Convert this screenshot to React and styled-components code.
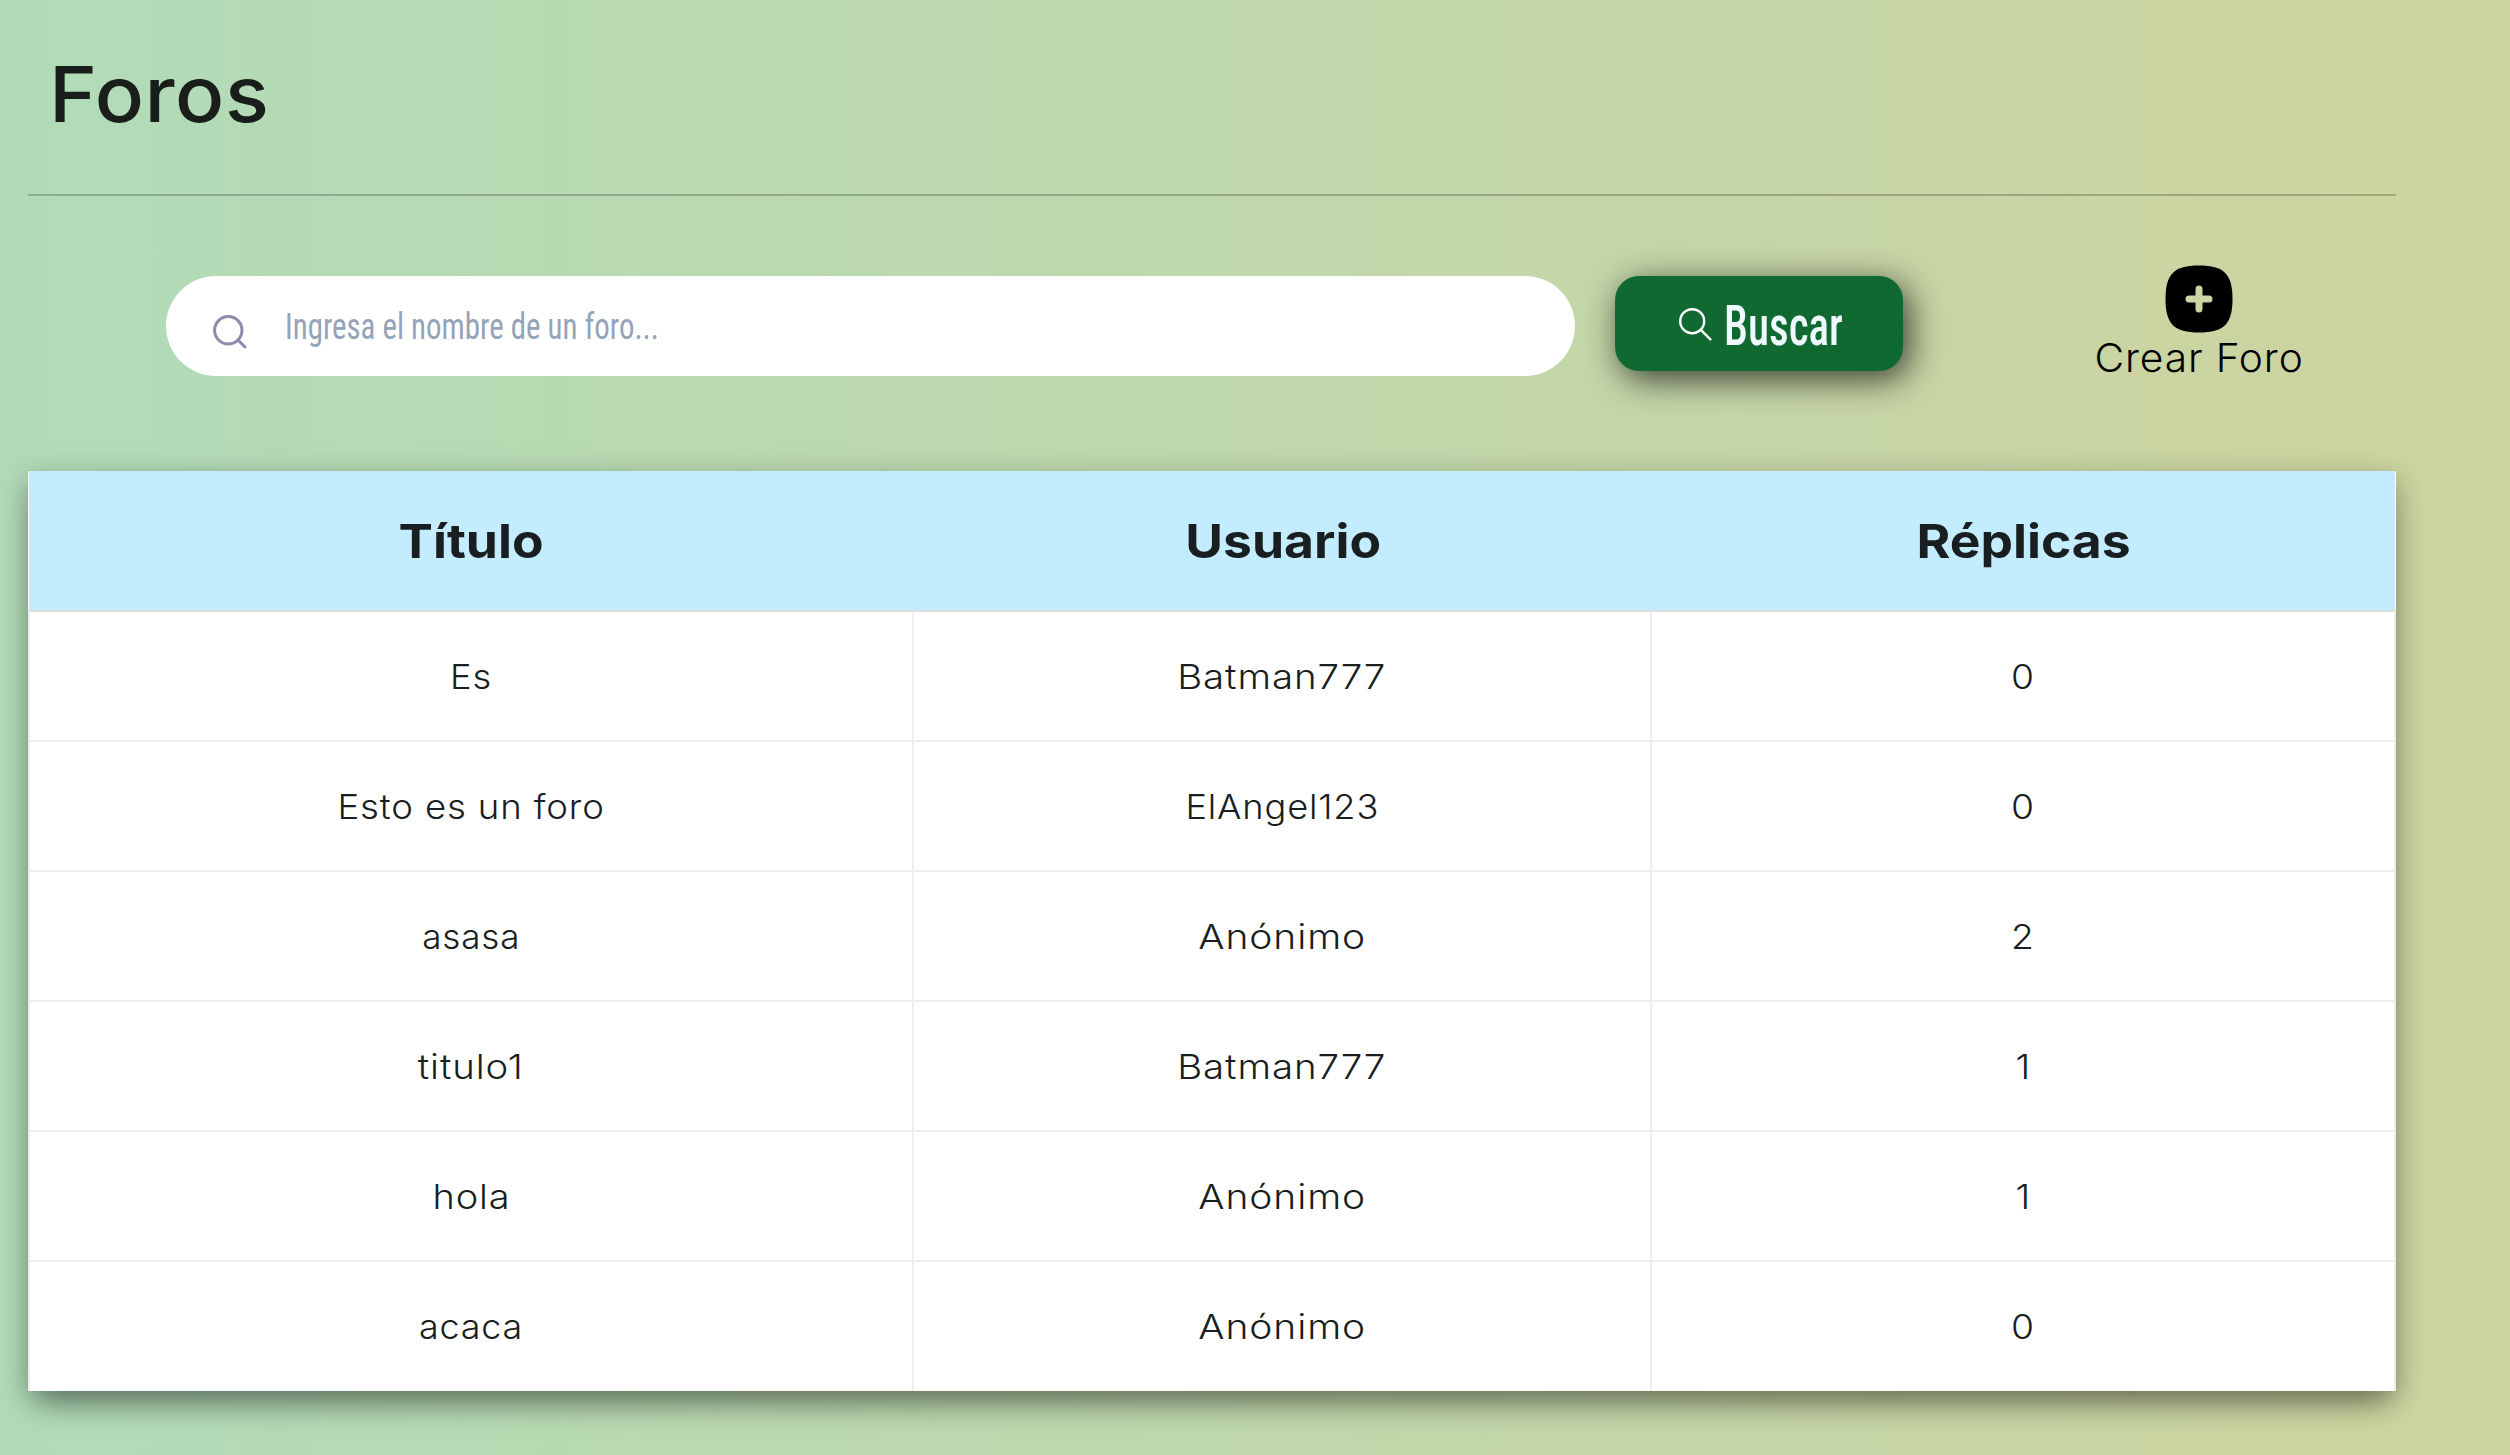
import React from "react";
import styled, { createGlobalStyle } from "styled-components";

const sans = `Inter, "Open Sans", sans-serif`;

const GlobalStyle = createGlobalStyle`
  *, *::before, *::after { box-sizing: border-box; }
  body { margin: 0; font-family: ${sans}; }
`;

const Page = styled.div`
  min-height: 1455px;
  padding: 0 114px 64px 28px;
  background: linear-gradient(90deg, #b1dbb8 0%, #ced49f 100%);
`;

const Header = styled.header`
  height: 196px;
  padding: 45px 0 0 21px;
  border-bottom: 2px solid rgba(25, 30, 25, 0.25);
`;

const Title = styled.h1`
  margin: 0;
  font-size: 77px;
  line-height: 98px;
  font-weight: 500;
  letter-spacing: 0.5px;
  color: #191e1a;
  transform: scaleX(1.06);
  transform-origin: left center;
`;

const Toolbar = styled.div`
  display: flex;
  align-items: flex-start;
  height: 275px;
  padding: 69px 0 0 138px;
`;

const SearchField = styled.label`
  display: flex;
  align-items: center;
  width: 1409px;
  height: 100px;
  margin-top: 11px;
  padding: 0 48px 0 47px;
  border-radius: 50px;
  background: #fff;
  svg { margin-top: 12px; flex: none; }
`;

const SearchInput = styled.input`
  flex: 1;
  height: 60px;
  margin: 1px 0 0 38px;
  padding: 0;
  border: 0;
  outline: 0;
  background: transparent;
  font: 400 36.5px "Roboto", sans-serif;
  font-stretch: 75%;
  transform: scaleX(0.846);
  transform-origin: left center;
  &::placeholder { color: #94a3b8; opacity: 1; }
`;

const SearchButton = styled.button`
  display: flex;
  align-items: center;
  width: 288px;
  height: 95px;
  margin: 11px 0 0 40px;
  padding: 0 0 0 64px;
  gap: 12px;
  border: 0;
  border-radius: 24px;
  background: #116932;
  color: aliceblue;
  box-shadow: 6px 8px 34px rgba(0, 0, 0, 0.72);
  svg { flex: none; margin-top: 1px; }
`;

const ButtonLabel = styled.span`
  width: 118px;
  margin-top: 4px;
  white-space: nowrap;
  text-align: left;
  font: 500 55px/90px "Roboto", sans-serif;
  font-stretch: 75%;
  transform: scaleX(0.785);
  transform-origin: left center;
`;

const CreateLink = styled.a`
  display: flex;
  flex-direction: column;
  align-items: center;
  width: 260px;
  margin-left: 166px;
  color: #000;
  font-size: 39px;
  font-weight: 300;
  line-height: 50px;
  letter-spacing: 0.8px;
  svg { display: block; }
`;

const Table = styled.table`
  width: 2368px;
  height: 920px;
  table-layout: fixed;
  border-collapse: separate;
  border-spacing: 0;
  background: #fff;
  text-align: center;
  box-shadow: 0 9px 28px rgba(0, 0, 0, 0.34), 0 24px 30px -14px rgba(0, 0, 0, 0.25);
`;

const HeadCell = styled.th`
  width: ${(p) => p.$width}px;
  height: 141px;
  padding: 0;
  background: #c4ecff;
  border-bottom: 2px solid #dedede;
  color: #191e20;
  font-size: 47px;
  font-weight: 700;
  &:first-child { border-left: 1px solid #fff; }
  &:last-child { border-right: 1px solid #fff; }
`;

const Cell = styled.td`
  height: 130px;
  padding: 0;
  border-right: 2px solid #eee;
  border-bottom: 2px solid #eee;
  color: #191e20;
  font-size: 34.5px;
  font-weight: 300;
  letter-spacing: 0.8px;
  &:first-child { border-left: 2px solid #eee; }
  tr:last-child > & { height: 129px; border-bottom: 0; }
`;

const Wide = styled.span`
  display: inline-block;
  transform: scaleX(${(p) => p.$stretch});
`;

const FieldIcon = () => (
  <svg width="34" height="34" viewBox="0 0 34 34" fill="none" stroke="#8d8aab" strokeWidth="3" strokeLinecap="round">
    <circle cx="15.3" cy="15.3" r="13.7" />
    <path d="M25.2 25.2 32 32" />
  </svg>
);

const ButtonIcon = () => (
  <svg width="33" height="33" viewBox="0 0 33 33" fill="none" stroke="#fff" strokeWidth="2.4" strokeLinecap="round">
    <circle cx="13.2" cy="13.2" r="12" />
    <path d="M21.8 21.8 31.4 31.4" />
  </svg>
);

const PlusIcon = () => (
  <svg width="68" height="68" viewBox="0 0 68 68">
    <path d="M34 0.5C59 0.5 67.5 9 67.5 34S59 67.5 34 67.5.5 59 .5 34 9 .5 34 .5Z" />
    <path d="M34 24v20M24 34h20" stroke="#ccd5a3" strokeWidth="7" strokeLinecap="round" />
  </svg>
);

const columns = [
  { label: "Título", width: 886 },
  { label: "Usuario", width: 738 },
  { label: "Réplicas", width: 744 },
];

const forums = [
  { title: "Es", user: "Batman777", replies: 0, stretch: 1.05 },
  { title: "Esto es un foro", user: "ElAngel123", replies: 0, stretch: 1.06 },
  { title: "asasa", user: "Anónimo", replies: 2, stretch: 1.015 },
  { title: "titulo1", user: "Batman777", replies: 1, stretch: 1.11 },
  { title: "hola", user: "Anónimo", replies: 1, stretch: 1.1 },
  { title: "acaca", user: "Anónimo", replies: 0, stretch: 1.04 },
];

const userStretch = { Batman777: 1.115, ElAngel123: 1.05, Anónimo: 1.13 };

export default function App() {
  return (
    <>
      <GlobalStyle />
      <Page>
        <Header>
          <Title>Foros</Title>
        </Header>
        <Toolbar>
          <SearchField>
            <FieldIcon />
            <SearchInput placeholder="Ingresa el nombre de un foro..." />
          </SearchField>
          <SearchButton>
            <ButtonIcon />
            <ButtonLabel>Buscar</ButtonLabel>
          </SearchButton>
          <CreateLink>
            <PlusIcon />
            <Wide $stretch={1.045}>Crear Foro</Wide>
          </CreateLink>
        </Toolbar>
        <Table>
          <thead>
            <tr>
              {columns.map((c) => (
                <HeadCell key={c.label} $width={c.width}>
                  <Wide $stretch={1.098}>{c.label}</Wide>
                </HeadCell>
              ))}
            </tr>
          </thead>
          <tbody>
            {forums.map((f, i) => (
              <tr key={i}>
                <Cell><Wide $stretch={f.stretch}>{f.title}</Wide></Cell>
                <Cell><Wide $stretch={userStretch[f.user]}>{f.user}</Wide></Cell>
                <Cell><Wide $stretch={1.08}>{f.replies}</Wide></Cell>
              </tr>
            ))}
          </tbody>
        </Table>
      </Page>
    </>
  );
}
